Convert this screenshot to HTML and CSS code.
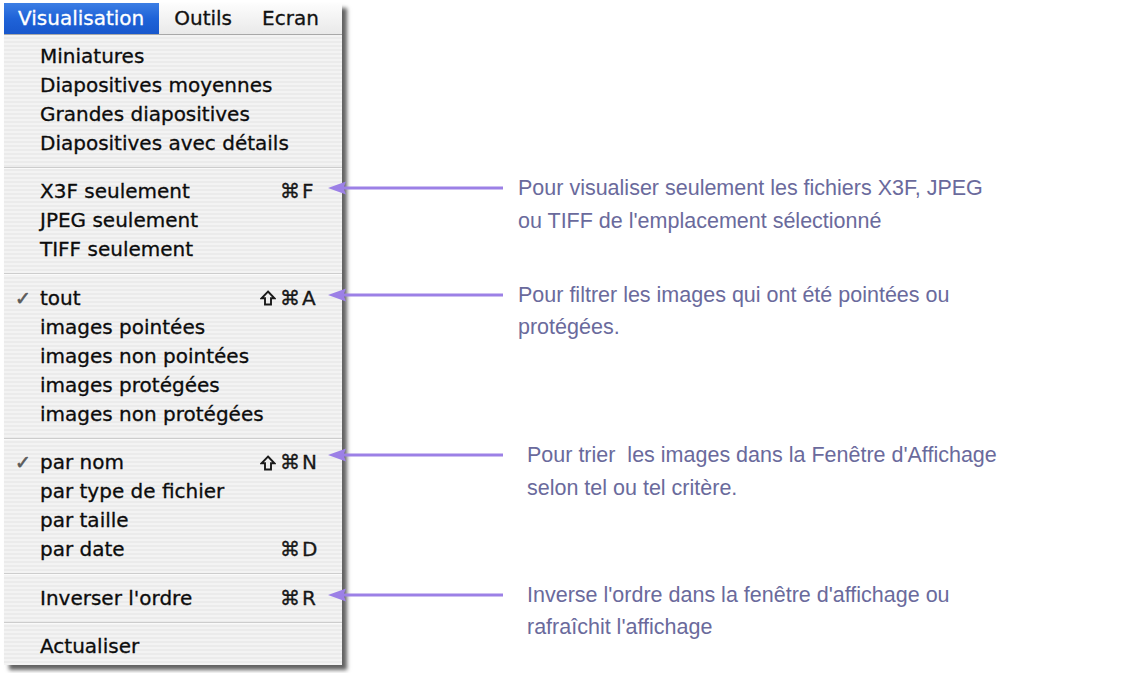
FILE: index.html
```html
<!DOCTYPE html>
<html lang="fr">
<head>
<meta charset="utf-8">
<title>Menu Visualisation</title>
<link rel="stylesheet" href="styles.css">
</head>
<body>
<div class="menu">
  <div class="menubar">
    <span class="title active">Visualisation</span>
    <span class="title">Outils</span>
    <span class="title">Ecran</span>
  </div>
  <ul class="panel">
    <li class="item"><span class="label">Miniatures</span></li>
    <li class="item"><span class="label">Diapositives moyennes</span></li>
    <li class="item"><span class="label">Grandes diapositives</span></li>
    <li class="item"><span class="label">Diapositives avec détails</span></li>
    <li class="sep"></li>
    <li class="item">
      <span class="label">X3F seulement</span>
      <span class="keys"><span class="mods">⌘</span><span class="key">F</span></span>
      <div class="note">
        <svg class="arrow" viewBox="0 0 175 14" width="175" height="14"><polygon points="0,7 18,0.5 15.5,7 18,13.5"/><rect x="14" y="5.5" width="161" height="3"/></svg>
        <p class="note-text">Pour visualiser seulement les fichiers X3F, JPEG<br>ou TIFF de l'emplacement sélectionné</p>
      </div>
    </li>
    <li class="item"><span class="label">JPEG seulement</span></li>
    <li class="item"><span class="label">TIFF seulement</span></li>
    <li class="sep"></li>
    <li class="item">
      <span class="check">✓</span>
      <span class="label">tout</span>
      <span class="keys"><svg class="shift" viewBox="0 0 16 16" width="16" height="16"><path d="M8 1.5 L14.5 8.3 H11 V14.5 H5 V8.3 H1.5 Z"/></svg><span class="mods">⌘</span><span class="key">A</span></span>
      <div class="note">
        <svg class="arrow" viewBox="0 0 175 14" width="175" height="14"><polygon points="0,7 18,0.5 15.5,7 18,13.5"/><rect x="14" y="5.5" width="161" height="3"/></svg>
        <p class="note-text">Pour filtrer les images qui ont été pointées ou<br>protégées.</p>
      </div>
    </li>
    <li class="item"><span class="label">images pointées</span></li>
    <li class="item"><span class="label">images non pointées</span></li>
    <li class="item"><span class="label">images protégées</span></li>
    <li class="item"><span class="label">images non protégées</span></li>
    <li class="sep"></li>
    <li class="item">
      <span class="check">✓</span>
      <span class="label">par nom</span>
      <span class="keys"><svg class="shift" viewBox="0 0 16 16" width="16" height="16"><path d="M8 1.5 L14.5 8.3 H11 V14.5 H5 V8.3 H1.5 Z"/></svg><span class="mods">⌘</span><span class="key">N</span></span>
      <div class="note note-far note-up">
        <svg class="arrow" viewBox="0 0 175 14" width="175" height="14"><polygon points="0,7 18,0.5 15.5,7 18,13.5"/><rect x="14" y="5.5" width="161" height="3"/></svg>
        <p class="note-text">Pour trier&nbsp; les images dans la Fenêtre d'Affichage<br>selon tel ou tel critère.</p>
      </div>
    </li>
    <li class="item"><span class="label">par type de fichier</span></li>
    <li class="item"><span class="label">par taille</span></li>
    <li class="item"><span class="label">par date</span><span class="keys"><span class="mods">⌘</span><span class="key">D</span></span></li>
    <li class="sep"></li>
    <li class="item">
      <span class="label">Inverser l'ordre</span>
      <span class="keys"><span class="mods">⌘</span><span class="key">R</span></span>
      <div class="note note-far">
        <svg class="arrow" viewBox="0 0 175 14" width="175" height="14"><polygon points="0,7 18,0.5 15.5,7 18,13.5"/><rect x="14" y="5.5" width="161" height="3"/></svg>
        <p class="note-text">Inverse l'ordre dans la fenêtre d'affichage ou<br>rafraîchit l'affichage</p>
      </div>
    </li>
    <li class="sep"></li>
    <li class="item"><span class="label">Actualiser</span></li>
  </ul>
</div>
</body>
</html>
```

FILE: styles.css
```css
html, body {
  margin: 0;
  padding: 0;
  background: #ffffff;
}

body {
  width: 1140px;
  height: 673px;
  overflow: hidden;
  font-family: "DejaVu Sans", "Noto Sans", sans-serif;
}

.menu {
  margin: 3px 0 0 4px;
  width: 338px;
  box-shadow: 5px 5px 4px rgba(0, 0, 0, 0.62);
}

.menubar {
  display: flex;
  height: 32px;
  box-sizing: border-box;
  border-bottom: 1px solid #a8a8a8;
  background: linear-gradient(#fdfdfd, #f1f1f1 60%, #e9e9e9);
}

.title {
  padding: 0 15px;
  font-size: 20px;
  line-height: 31px;
  color: #111;
  -webkit-text-stroke: 0.3px #111;
}

.title.active {
  color: #fff;
  -webkit-text-stroke: 0.3px #fff;
  padding-left: 14px;
  background: linear-gradient(#3c7ee4, #1f63d8 50%, #1857cc);
}

.panel {
  list-style: none;
  margin: 0;
  padding: 6.5px 0 4px;
  background: repeating-linear-gradient(#f3f3f3 0, #f3f3f3 2px, #ebebeb 2px, #ebebeb 4px);
}

.item {
  position: relative;
  display: grid;
  grid-template-columns: 25px 1fr auto;
  align-items: center;
  height: 29px;
  padding: 0 18px 0 11px;
  font-size: 20px;
  line-height: 29px;
  color: #0c0c0c;
  -webkit-text-stroke: 0.3px #0c0c0c;
  white-space: nowrap;
}

.check {
  grid-column: 1;
  font-size: 19px;
  color: #5a5a5a;
  -webkit-text-stroke: 0.6px #5a5a5a;
}

.label {
  grid-column: 2;
}

.keys {
  grid-column: 3;
  display: flex;
  align-items: center;
  color: #1a1a1a;
}

.shift {
  flex: none;
  margin-right: 4px;
  fill: none;
  stroke: #1a1a1a;
  stroke-width: 1.9;
  stroke-linejoin: miter;
}

.mods {
  letter-spacing: 1px;
}

.key {
  width: 22px;
  padding-left: 1px;
}

.sep {
  height: 19.5px;
  display: flex;
  align-items: center;
}

.sep::before {
  content: "";
  display: block;
  width: 100%;
  height: 1px;
  background: #cdcdcd;
  box-shadow: 0 1px 0 #fafafa;
}

.note {
  position: absolute;
  left: 324px;
  top: -5px;
  display: flex;
  align-items: flex-start;
  gap: 15px;
  z-index: 2;
  -webkit-text-stroke: 0;
}

.note-far {
  gap: 24px;
}

.note-up {
  top: -9px;
}

.arrow {
  flex: none;
  margin-top: 9px;
  fill: #9c80e6;
}

.note-text {
  margin: 0;
  font-family: "Liberation Sans", Arial, sans-serif;
  font-size: 21.5px;
  line-height: 32.5px;
  color: #6a6a9c;
  white-space: nowrap;
}
```
